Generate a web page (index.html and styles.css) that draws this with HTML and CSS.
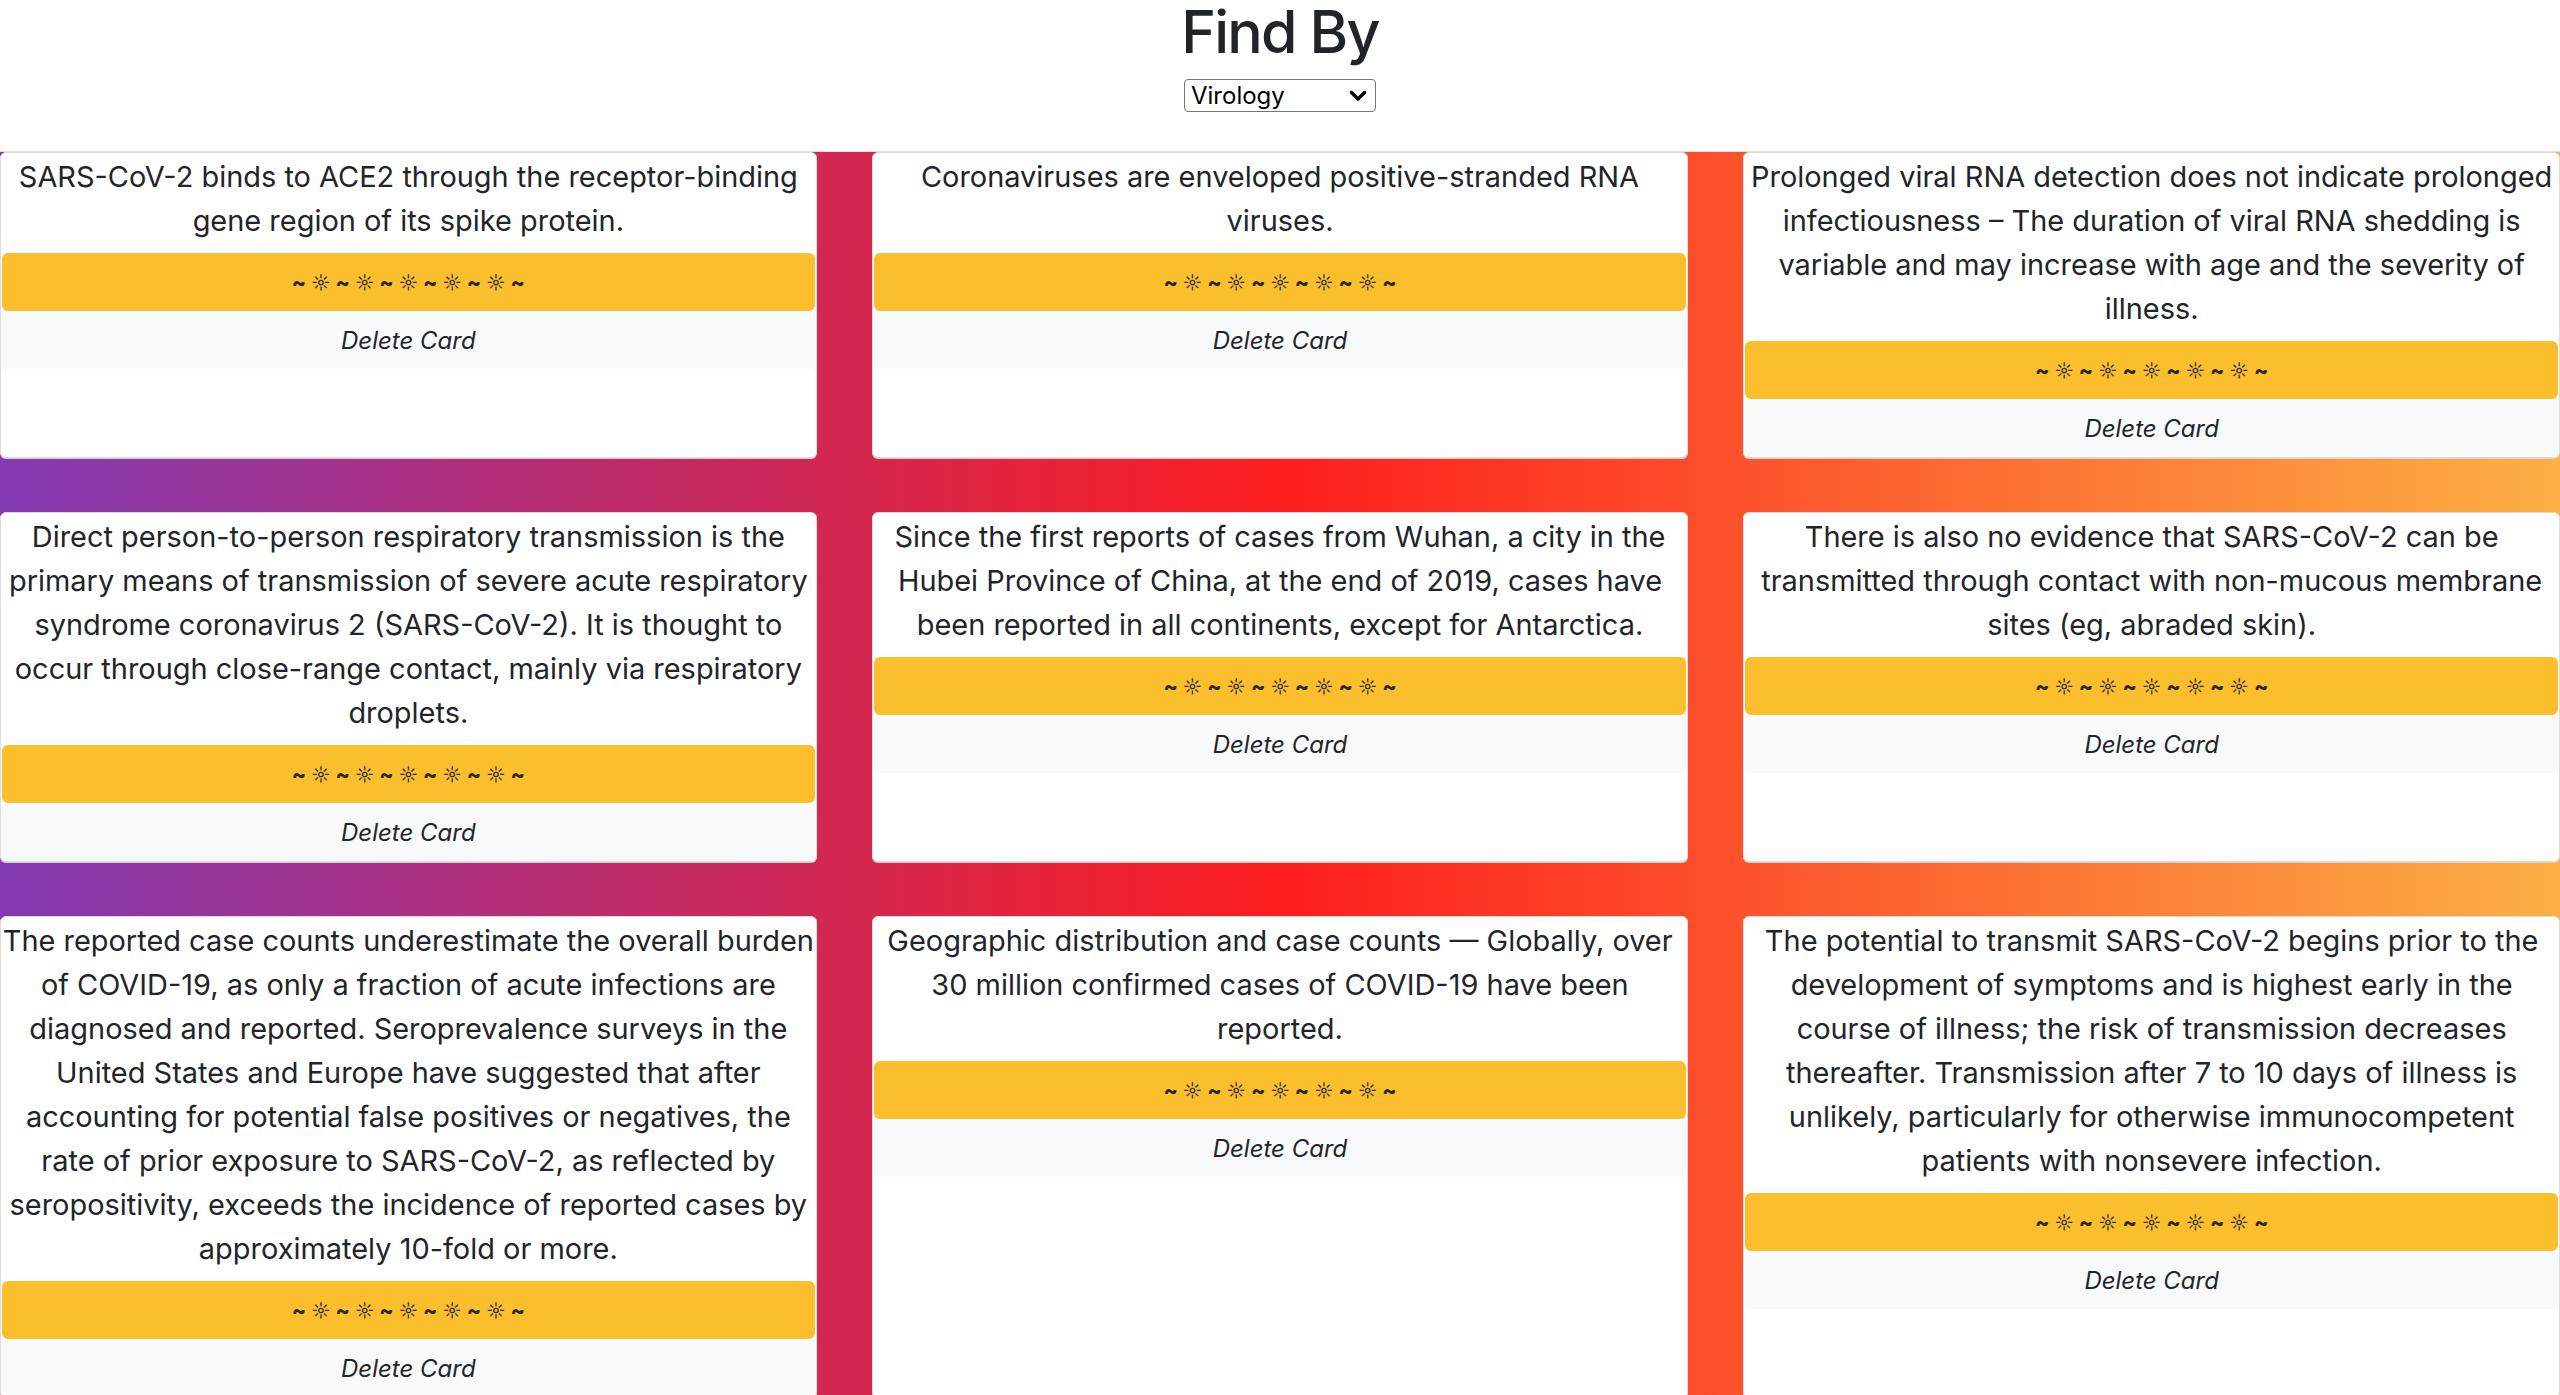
FILE: index.html
```html
<!DOCTYPE html>
<html lang="en">
<head>
<meta charset="utf-8">
<title>Find By</title>
<link rel="stylesheet" href="styles.css">
</head>
<body>
<header class="header">
  <h1 class="title">Find By</h1>
  <div class="select-wrap">
    <select class="topic-select">
      <option>Virology</option>
      <option>Transmission</option>
      <option>Epidemiology</option>
    </select>
    <svg class="chevron" viewBox="0 0 18 12" width="18" height="12" aria-hidden="true"><path d="M2.5 2.5 L9 9 L15.5 2.5" fill="none" stroke="#000" stroke-width="3.4" stroke-linecap="round" stroke-linejoin="round"/></svg>
  </div>
</header>
<main class="board">
  <div class="card">
    <p class="card-text">SARS-CoV-2 binds to ACE2 through the receptor-binding gene region of its spike protein.</p>
    <div class="divider"><b>~</b> ☼ <b>~</b> ☼ <b>~</b> ☼ <b>~</b> ☼ <b>~</b> ☼ <b>~</b></div>
    <div class="delete">Delete Card</div>
  </div>
  <div class="card">
    <p class="card-text">Coronaviruses are enveloped positive-stranded RNA viruses.</p>
    <div class="divider"><b>~</b> ☼ <b>~</b> ☼ <b>~</b> ☼ <b>~</b> ☼ <b>~</b> ☼ <b>~</b></div>
    <div class="delete">Delete Card</div>
  </div>
  <div class="card">
    <p class="card-text">Prolonged viral RNA detection does not indicate prolonged infectiousness – The duration of viral RNA shedding is variable and may increase with age and the severity of illness.</p>
    <div class="divider"><b>~</b> ☼ <b>~</b> ☼ <b>~</b> ☼ <b>~</b> ☼ <b>~</b> ☼ <b>~</b></div>
    <div class="delete">Delete Card</div>
  </div>
  <div class="card">
    <p class="card-text">Direct person-to-person respiratory transmission is the primary means of transmission of severe acute respiratory syndrome coronavirus 2 (SARS-CoV-2). It is thought to occur through close-range contact, mainly via respiratory droplets.</p>
    <div class="divider"><b>~</b> ☼ <b>~</b> ☼ <b>~</b> ☼ <b>~</b> ☼ <b>~</b> ☼ <b>~</b></div>
    <div class="delete">Delete Card</div>
  </div>
  <div class="card">
    <p class="card-text">Since the first reports of cases from Wuhan, a city in the Hubei Province of China, at the end of 2019, cases have been reported in all continents, except for Antarctica.</p>
    <div class="divider"><b>~</b> ☼ <b>~</b> ☼ <b>~</b> ☼ <b>~</b> ☼ <b>~</b> ☼ <b>~</b></div>
    <div class="delete">Delete Card</div>
  </div>
  <div class="card">
    <p class="card-text">There is also no evidence that SARS-CoV-2 can be transmitted through contact with non-mucous membrane sites (eg, abraded skin).</p>
    <div class="divider"><b>~</b> ☼ <b>~</b> ☼ <b>~</b> ☼ <b>~</b> ☼ <b>~</b> ☼ <b>~</b></div>
    <div class="delete">Delete Card</div>
  </div>
  <div class="card">
    <p class="card-text">The reported case counts underestimate the overall burden of COVID-19, as only a fraction of acute infections are diagnosed and reported. Seroprevalence surveys in the United States and Europe have suggested that after accounting for potential false positives or negatives, the rate of prior exposure to SARS-CoV-2, as reflected by seropositivity, exceeds the incidence of reported cases by approximately 10-fold or more.</p>
    <div class="divider"><b>~</b> ☼ <b>~</b> ☼ <b>~</b> ☼ <b>~</b> ☼ <b>~</b> ☼ <b>~</b></div>
    <div class="delete">Delete Card</div>
  </div>
  <div class="card">
    <p class="card-text">Geographic distribution and case counts — Globally, over 30 million confirmed cases of COVID-19 have been reported.</p>
    <div class="divider"><b>~</b> ☼ <b>~</b> ☼ <b>~</b> ☼ <b>~</b> ☼ <b>~</b> ☼ <b>~</b></div>
    <div class="delete">Delete Card</div>
  </div>
  <div class="card">
    <p class="card-text">The potential to transmit SARS-CoV-2 begins prior to the development of symptoms and is highest early in the course of illness; the risk of transmission decreases thereafter. Transmission after 7 to 10 days of illness is unlikely, particularly for otherwise immunocompetent patients with nonsevere infection.</p>
    <div class="divider"><b>~</b> ☼ <b>~</b> ☼ <b>~</b> ☼ <b>~</b> ☼ <b>~</b> ☼ <b>~</b></div>
    <div class="delete">Delete Card</div>
  </div>
</main>
</body>
</html>
```
FILE: styles.css
```css
html, body {
  margin: 0;
  padding: 0;
}
body {
  font-family: Inter, "Noto Sans", "DejaVu Sans", sans-serif;
  color: #212529;
  background: #fff;
}
.header {
  display: flex;
  flex-direction: column;
  align-items: center;
  padding-bottom: 39px;
}
.title {
  margin: -4px 0 0 0;
  font-size: 59px;
  font-weight: 500;
  letter-spacing: -1.8px;
  line-height: 72px;
  color: #212529;
}
.select-wrap {
  position: relative;
  margin-top: 11px;
  width: 192px;
  height: 33px;
}
.topic-select {
  appearance: none;
  -webkit-appearance: none;
  width: 192px;
  height: 33px;
  box-sizing: border-box;
  border: 1.5px solid #767676;
  border-radius: 4px;
  background: #fff;
  font-family: Inter, "DejaVu Sans", sans-serif;
  font-size: 24px;
  padding: 0 0 0 6px;
  color: #000;
}
.chevron {
  position: absolute;
  right: 9px;
  top: 11px;
  pointer-events: none;
}
.board {
  display: grid;
  grid-template-columns: repeat(3, 1fr);
  align-content: start;
  column-gap: 55px;
  row-gap: 54px;
  border-top: 1px solid #e2e2e2;
  background: linear-gradient(to right, #833ab4, #fd1d1d, #fcb045);
}
.card {
  display: flex;
  flex-direction: column;
  background: #fff;
  border: 1px solid #dcdcdc;
  border-radius: 6px;
  box-shadow: 0 1px 0 #d4d4d4;
  padding: 0 1px;
}
.card-text {
  margin: 0 -1px 10px -1px;
  padding-top: 2px;
  font-size: 28.95px;
  line-height: 44px;
  text-align: center;
}
.divider {
  height: 58px;
  display: flex;
  align-items: center;
  justify-content: center;
  background: #fbbf2e;
  border-radius: 6px;
  font-family: Inter, "DejaVu Sans", sans-serif;
  font-size: 18px;
  word-spacing: 0;
  color: #2b2a26;
  white-space: pre;
}
.divider b {
  font-size: 21px;
  font-weight: 800;
  line-height: 1;
}
.delete {
  height: 58px;
  display: flex;
  align-items: center;
  justify-content: center;
  background: #f8f9fa;
  border-radius: 0 0 4px 4px;
  font-size: 24px;
  font-style: italic;
}
```
